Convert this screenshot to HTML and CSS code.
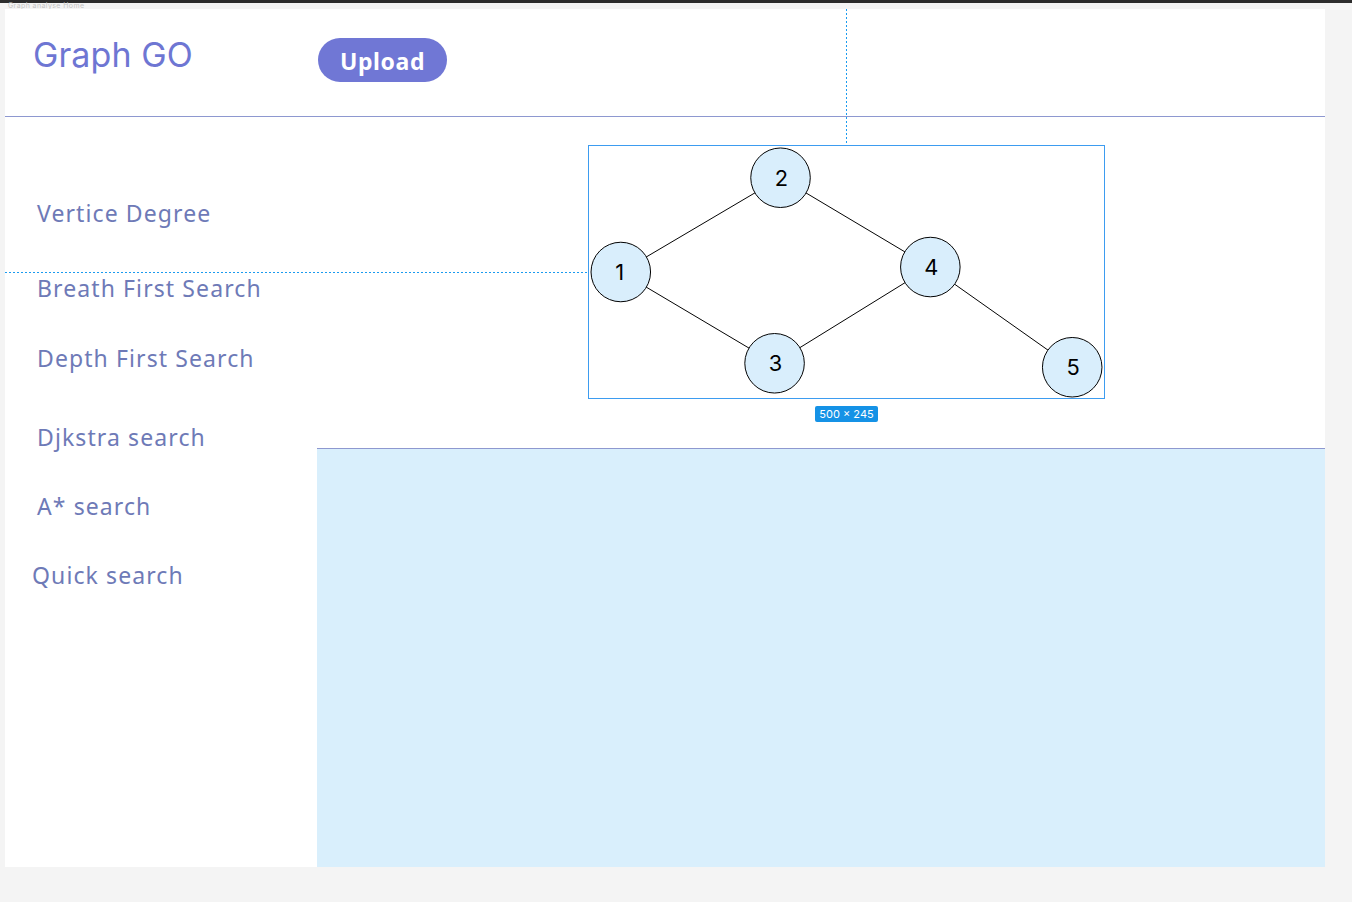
FILE: index.html
```html
<!DOCTYPE html>
<html lang="en">
<head>
<meta charset="utf-8">
<title>Graph GO</title>
<link rel="stylesheet" href="styles.css">
</head>
<body>
<div class="topbar"></div>
<div class="frame-label">Graph analyse Home</div>
<div class="frame">
  <header class="header">
    <h1 class="title">Graph GO</h1>
    <button class="upload">Upload</button>
  </header>
  <div class="body">
    <nav class="sidebar">
      <a class="item item-vertice">Vertice Degree</a>
      <a class="item item-breath">Breath First Search</a>
      <a class="item item-depth">Depth First Search</a>
      <a class="item item-dijkstra">Djkstra search</a>
      <a class="item item-astar">A* search</a>
      <a class="item item-quick">Quick search</a>
    </nav>
    <main class="main">
      <section class="graph-area">
        <div class="graph-box">
          <svg class="graph" viewBox="0 0 517 254" width="517" height="254">
            <g class="edges">
              <line x1="31" y1="127" x2="192" y2="32"/>
              <line x1="192" y1="32" x2="343" y2="122"/>
              <line x1="31" y1="127" x2="186" y2="219"/>
              <line x1="186" y1="219" x2="343" y2="122"/>
              <line x1="343" y1="122" x2="486" y2="223"/>
            </g>
            <g class="nodes">
              <circle cx="31" cy="127" r="30"/>
              <circle cx="192" cy="32" r="30"/>
              <circle cx="186" cy="219" r="30"/>
              <circle cx="343" cy="122" r="30"/>
              <circle cx="486" cy="223" r="30"/>
            </g>
            <g class="labels">
              <text x="30" y="135">1</text>
              <text x="193" y="40">2</text>
              <text x="187" y="227">3</text>
              <text x="344" y="130">4</text>
              <text x="487" y="231">5</text>
            </g>
          </svg>
          <span class="size-badge">500 × 245</span>
        </div>
      </section>
      <section class="result-area"></section>
    </main>
  </div>
  <div class="guide guide-v"></div>
  <div class="guide guide-h"></div>
</div>
</body>
</html>
```
FILE: styles.css
```css
* { box-sizing: border-box; }
html, body { margin: 0; padding: 0; }
body {
  background: #f4f4f4;
  width: 1352px;
  height: 902px;
  overflow: hidden;
  font-family: "Noto Sans", "DejaVu Sans", sans-serif;
}
.topbar {
  height: 3px;
  background: #2c2c2c;
}
.frame-label {
  height: 6px;
  padding-left: 8px;
  font-family: "Inter", sans-serif;
  font-size: 7px;
  line-height: 6px;
  letter-spacing: 0.4px;
  color: #c4c4c4;
}
.frame {
  position: relative;
  margin-left: 5px;
  width: 1320px;
  height: 858px;
  background: #ffffff;
  display: flex;
  flex-direction: column;
}
.header {
  height: 108px;
  border-bottom: 1px solid #8e98d0;
  display: flex;
  align-items: flex-start;
  padding-left: 28px;
}
.title {
  margin: 0;
  margin-top: 24px;
  width: 285px;
  font-family: "Inter", sans-serif;
  font-weight: 400;
  font-size: 34px;
  line-height: 44px;
  color: #6e76d3;
  letter-spacing: 0.1px;
}
.upload {
  margin-top: 29px;
  width: 129px;
  height: 44px;
  border: none;
  border-radius: 22px;
  background: #7077d5;
  color: #ffffff;
  font-family: "Noto Sans", sans-serif;
  font-weight: 700;
  font-size: 23px;
  letter-spacing: 0.6px;
  padding: 0;
  padding-top: 2px;
}
.body {
  flex: 1;
  display: flex;
}
.sidebar {
  width: 312px;
  display: flex;
  flex-direction: column;
  align-items: flex-start;
  padding-left: 27px;
  padding-top: 81px;
}
.item {
  display: block;
  margin-left: 5px;
  font-size: 23px;
  line-height: 31px;
  color: #6e7ab7;
  letter-spacing: 1.1px;
  white-space: nowrap;
}
.item + .item { margin-top: 38px; }
.item-vertice + .item-breath { margin-top: 44px; }
.item-breath + .item-depth { margin-top: 39px; }
.item-depth + .item-dijkstra { margin-top: 48px; }
.item-quick { margin-left: 0; }
.main {
  flex: 1;
  display: flex;
  flex-direction: column;
}
.graph-area {
  height: 331px;
  padding-left: 271px;
  padding-top: 28px;
}
.graph-box {
  width: 517px;
  display: flex;
  flex-direction: column;
  align-items: center;
}
.graph {
  display: block;
  border: 1px solid #3d9cf0;
  overflow: visible;
}
.edges line {
  stroke: #000000;
  stroke-width: 1;
}
.nodes circle {
  fill: #d9eefc;
  stroke: #000000;
  stroke-width: 1;
}
.labels text {
  font-family: "Inter", sans-serif;
  font-size: 22px;
  fill: #000000;
  text-anchor: middle;
}
.size-badge {
  margin-top: 7px;
  background: #1592e6;
  color: #ffffff;
  font-family: "Inter", sans-serif;
  font-size: 11px;
  line-height: 16px;
  padding: 0 4px;
  border-radius: 2px;
}
.result-area {
  flex: 1;
  border-top: 1px solid #8e98d0;
  background: #d9effc;
}
.guide {
  position: absolute;
}
.guide-v {
  left: 841px;
  top: 0;
  width: 1px;
  height: 136px;
  background: repeating-linear-gradient(to bottom, #1a9bf0 0 2px, transparent 2px 4px);
}
.guide-h {
  left: 0;
  top: 263px;
  width: 583px;
  height: 1px;
  background: repeating-linear-gradient(to right, #1a9bf0 0 2px, transparent 2px 4px);
}
```
